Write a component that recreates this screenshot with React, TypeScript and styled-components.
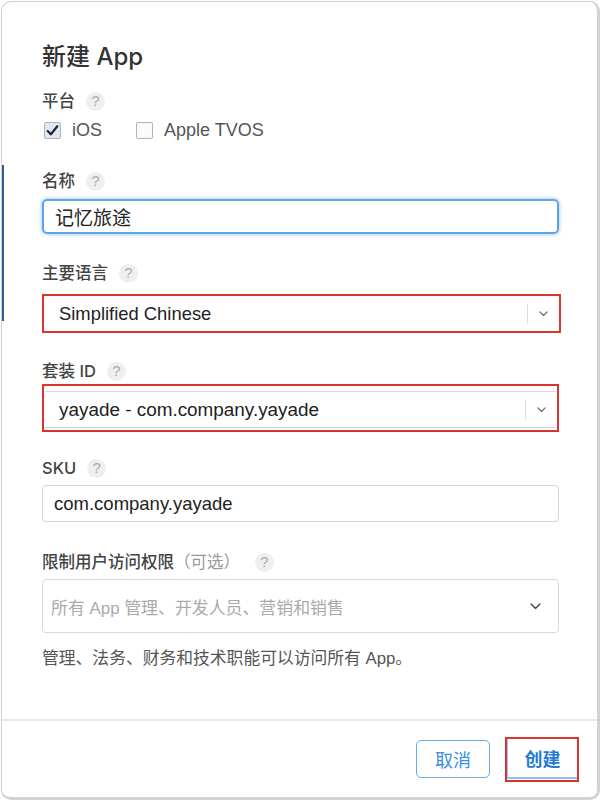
import React from "react";
import styled, { createGlobalStyle } from "styled-components";

const GlobalStyle = createGlobalStyle`
  html, body { margin: 0; padding: 0; background: #ffffff; }
  body { font-family: "Liberation Sans", "Noto Sans CJK SC", sans-serif; color: #333; }
  * { box-sizing: border-box; }
`;

const Panel = styled.div`
  margin: 1px 0 0 1px;
  width: 599px;
  height: 799px;
  border: 1px solid #cfcfcf;
  border-right: 3px solid #d3d3d3;
  border-bottom: 3px solid #d3d3d3;
  border-radius: 10px;
  background: linear-gradient(#2f5d8e, #2f5d8e) 0 163px / 2px 156px no-repeat, #ffffff;
  display: flex;
  flex-direction: column;
  overflow: hidden;
`;

const Body = styled.div`
  flex: 1;
  padding: 40px 38px 0 40px;
  display: flex;
  flex-direction: column;
`;

const Title = styled.h1`
  margin: 0;
  font-family: "Inter", "Noto Sans CJK SC", sans-serif;
  font-size: 24px;
  line-height: 30px;
  font-weight: 500;
  color: #333;
`;

const Label = styled.div<{ $mt: number }>`
  margin-top: ${(p) => p.$mt}px;
  display: flex;
  align-items: center;
  gap: 11px;
  font-family: "Inter", "Noto Sans CJK SC", sans-serif;
  font-size: 16.5px;
  line-height: 20px;
  font-weight: 500;
  color: #444;
`;

const Optional = styled.span`
  color: #999;
  font-weight: 400;
  margin-right: 4px;
`;

const HelpBadge = styled.span`
  width: 19px;
  height: 19px;
  border-radius: 50%;
  background: #efefef;
  color: #aaa;
  font-family: "Liberation Sans", sans-serif;
  font-size: 15px;
  font-weight: 400;
  display: inline-flex;
  align-items: center;
  justify-content: center;
`;

const CheckRow = styled.div`
  margin-top: 8px;
  height: 22px;
  display: flex;
  align-items: center;
`;

const CheckItem = styled.label<{ $ml?: number }>`
  display: flex;
  align-items: center;
  gap: 11px;
  margin-left: ${(p) => p.$ml ?? 0}px;
  font-size: 18px;
  color: #555;
`;

const Box = styled.span<{ $checked?: boolean }>`
  width: 17px;
  height: 17px;
  border: 1px solid #b3b3b3;
  border-radius: 2px;
  background: ${(p) => (p.$checked ? "#dce8f6" : "#fafafa")};
  display: inline-flex;
  align-items: center;
  justify-content: center;
`;

const TextInput = styled.div<{ $focused?: boolean; $h: number; $mt: number }>`
  margin-top: ${(p) => p.$mt}px;
  height: ${(p) => p.$h}px;
  display: flex;
  align-items: center;
  border-radius: ${(p) => (p.$focused ? 5 : 4)}px;
  border: ${(p) => (p.$focused ? "2px solid #5ea3e9" : "1px solid #d5d5d5")};
  box-shadow: ${(p) => (p.$focused ? "0 0 4px rgba(94,163,233,0.7)" : "none")};
  padding-left: 11px;
  font-size: ${(p) => (p.$focused ? 19 : 18.5)}px;
  color: #222;
`;

const Highlight = styled.div<{ $mt: number; $h: number; $inset?: boolean }>`
  margin-top: ${(p) => p.$mt}px;
  margin-right: ${(p) => (p.$inset ? 0 : -2)}px;
  height: ${(p) => p.$h}px;
  border: 2px solid #d9352d;
  padding: ${(p) => (p.$inset ? "5px 0 2px 1px" : "0")};
  display: flex;
  flex-direction: column;
`;

const SelectBox = styled.div<{ $framed?: boolean }>`
  flex: 1;
  display: flex;
  align-items: center;
  background: #fff;
  border-top: ${(p) => (p.$framed ? "1px solid #dcdcdc" : "none")};
  border-bottom: ${(p) => (p.$framed ? "1px solid #bcd6ec" : "none")};
  padding-left: ${(p) => (p.$framed ? 14 : 15)}px;
  font-size: ${(p) => (p.$framed ? 18.9 : 18.4)}px;
  color: #222;
`;

const SelectValue = styled.span`
  flex: 1;
`;

const Separator = styled.span`
  width: 1px;
  height: 20px;
  background: #dedede;
`;

const ChevronCell = styled.span`
  width: 31px;
  display: flex;
  align-items: center;
  justify-content: center;
`;

const MultiSelect = styled.div`
  margin-top: 7px;
  height: 54px;
  border: 1px solid #d8d8d8;
  border-radius: 4px;
  display: flex;
  align-items: center;
  padding: 0 17px 0 8px;
  font-size: 16.9px;
  color: #aaa;
`;

const HelpText = styled.p`
  margin: 16px 0 0;
  font-size: 16.8px;
  line-height: 20px;
  color: #555;
`;

const Footer = styled.div`
  height: 78px;
  border-top: 2px solid #e9e9e9;
  display: flex;
  justify-content: flex-end;
  align-items: flex-start;
  gap: 15px;
  padding: 16px 18px 0 0;
`;

const CancelButton = styled.button`
  margin-top: 3px;
  width: 74px;
  height: 38px;
  border: 1px solid #67abec;
  border-radius: 5px;
  background: #fff;
  color: #3a8ee0;
  font-family: inherit;
  font-size: 18px;
  padding: 0;
`;

const CreateFrame = styled.div`
  width: 74px;
  height: 45px;
  border: 2px solid #d9352d;
  display: flex;
`;

const CreateButton = styled.button`
  flex: 1;
  border: none;
  border-left: 1px solid #9cc8f2;
  border-bottom: 2px solid #8cc0f0;
  background: #fff;
  color: #1f7bd6;
  font-family: inherit;
  font-size: 18px;
  font-weight: 700;
  padding: 0;
  margin-bottom: 1px;
`;

const Chevron = ({ size = 10, color = "#555" }: { size?: number; color?: string }) => (
  <svg width={size} height={size * 0.6} viewBox="0 0 10 6" fill="none">
    <path d="M1 1 L5 5 L9 1" stroke={color} strokeWidth="1.3" strokeLinecap="round" strokeLinejoin="round" />
  </svg>
);

const Help = () => <HelpBadge>?</HelpBadge>;

export default function App() {
  return (
    <>
      <GlobalStyle />
      <Panel>
        <Body>
          <Title>新建 App</Title>

          <Label $mt={19}>
            平台 <Help />
          </Label>
          <CheckRow>
            <CheckItem $ml={2}>
              <Box $checked>
                <svg width="15" height="15" viewBox="0 0 14 14" fill="none">
                  <path d="M2.5 7.5 L5.5 10.5 L11.5 3" stroke="#222" strokeWidth="2" strokeLinecap="round" strokeLinejoin="round" />
                </svg>
              </Box>
              iOS
            </CheckItem>
            <CheckItem $ml={34}>
              <Box />
              Apple TVOS
            </CheckItem>
          </CheckRow>

          <Label $mt={30}>
            名称 <Help />
          </Label>
          <TextInput $focused $h={35} $mt={8}>
            记忆旅途
          </TextInput>

          <Label $mt={29}>
            主要语言 <Help />
          </Label>
          <Highlight $mt={11} $h={39}>
            <SelectBox>
              <SelectValue>Simplified Chinese</SelectValue>
              <Separator />
              <ChevronCell>
                <Chevron size={9} color="#666" />
              </ChevronCell>
            </SelectBox>
          </Highlight>

          <Label $mt={28}>
            套装 ID <Help />
          </Label>
          <Highlight $mt={3} $h={48} $inset>
            <SelectBox $framed>
              <SelectValue>yayade - com.company.yayade</SelectValue>
              <Separator />
              <ChevronCell>
                <Chevron size={9} color="#666" />
              </ChevronCell>
            </SelectBox>
          </Highlight>

          <Label $mt={26}>
            SKU <Help />
          </Label>
          <TextInput $h={37} $mt={7}>
            com.company.yayade
          </TextInput>

          <Label $mt={30}>
            <span>
              限制用户访问权限<Optional>（可选）</Optional>
            </span>
            <Help />
          </Label>
          <MultiSelect>
            <SelectValue>所有 App 管理、开发人员、营销和销售</SelectValue>
            <Chevron size={11} color="#444" />
          </MultiSelect>

          <HelpText>管理、法务、财务和技术职能可以访问所有 App。</HelpText>
        </Body>
        <Footer>
          <CancelButton>取消</CancelButton>
          <CreateFrame>
            <CreateButton>创建</CreateButton>
          </CreateFrame>
        </Footer>
      </Panel>
    </>
  );
}
